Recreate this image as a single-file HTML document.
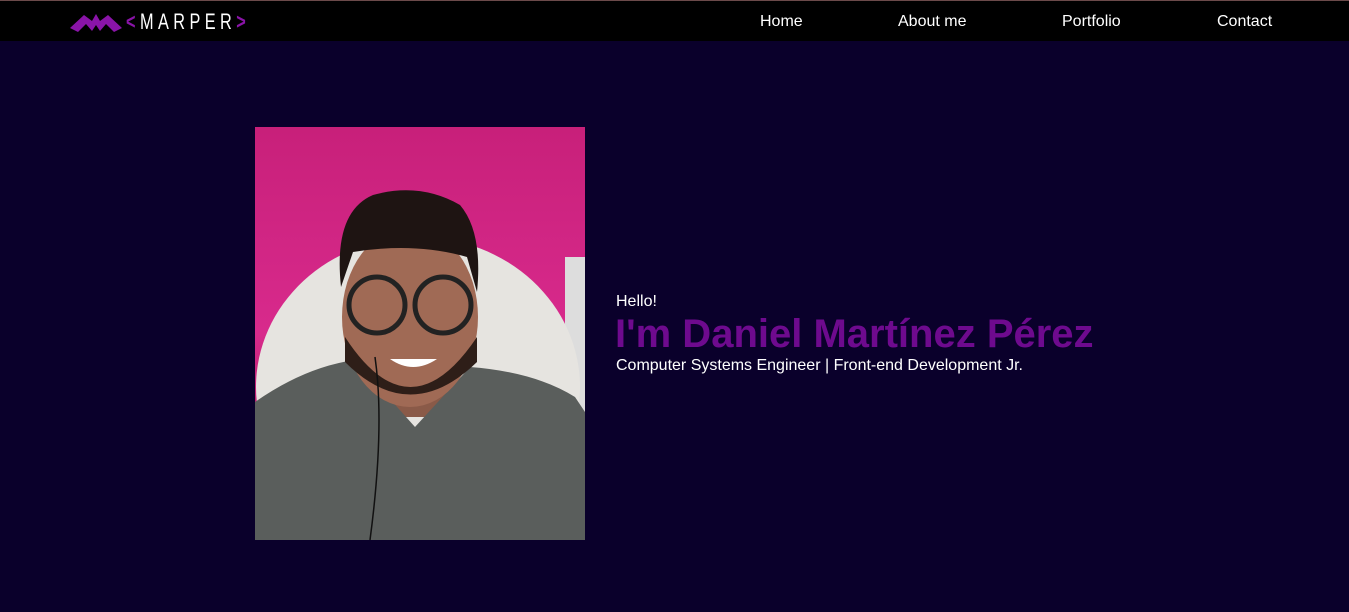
<!DOCTYPE html>
<html><head><meta charset="utf-8"><style>
*{margin:0;padding:0;box-sizing:border-box}
body{width:1349px;height:612px;background:#0a002b;font-family:"Liberation Sans",Arial,sans-serif;overflow:hidden;position:relative}
header{position:absolute;left:0;top:0;width:1349px;height:41px;background:#000;border-top:1px solid #6b4a4a}
.logo{position:absolute;left:70px;top:10px}
.brand{position:absolute;left:126px;top:8px;color:#fff;font-size:22px;letter-spacing:6px;font-family:"Liberation Sans Narrow","Liberation Sans",sans-serif;transform:scaleX(.74);transform-origin:left;white-space:nowrap}
.brand b{color:#8a14a8;font-weight:bold}
nav a{position:absolute;top:12px;color:#fff;font-size:16px;text-decoration:none}
.photo{position:absolute;left:255px;top:127px}
.t1{position:absolute;left:616px;top:293px;color:#fff;font-size:16px}
.t2{position:absolute;left:615px;top:312px;color:#6e0a8e;font-size:40px;font-weight:bold}
.t3{position:absolute;left:616px;top:357px;color:#fff;font-size:16px}
</style></head><body>
<header>
<svg class="logo" width="52" height="22" viewBox="0 0 52 22"><path d="M0 17 L14 4 L22 10 L26 3 L30 10 L38 4 L52 17 L44 21 L36 13 L30 20 L26 14 L22 20 L16 13 L8 21Z" fill="#8a14a8"/></svg>
<div class="brand"><b>&lt;</b>MARPER<b>&gt;</b></div>
<nav><a style="left:760px">Home</a><a style="left:898px">About me</a><a style="left:1062px">Portfolio</a><a style="left:1217px">Contact</a></nav>
</header>
<svg class="photo" width="330" height="413" viewBox="0 0 330 413">
<defs><linearGradient id="c" x1="0" y1="0" x2="0" y2="1"><stop offset="0" stop-color="#c8207a"/><stop offset=".5" stop-color="#d82a8c"/><stop offset="1" stop-color="#8a1040"/></linearGradient></defs>
<rect width="330" height="413" fill="url(#c)"/>
<rect x="310" y="130" width="20" height="200" fill="#ddd"/>
<ellipse cx="163" cy="260" rx="162" ry="150" fill="#e6e4e0"/>
<rect x="125" y="230" width="70" height="60" fill="#8a5a48"/>
<path d="M0 275 Q50 240 100 233 L160 300 L215 240 Q280 245 320 270 L330 285 L330 413 L0 413Z" fill="#5a5e5c"/>
<ellipse cx="155" cy="190" rx="68" ry="90" fill="#a06a55"/>
<path d="M90 210 Q155 310 222 210 L222 235 Q155 300 90 235Z" fill="#2e1e18"/>
<path d="M86 160 Q78 85 118 68 Q165 55 205 78 Q228 105 222 165 L212 130 Q160 115 98 125Z" fill="#1e1412"/>
<circle cx="122" cy="178" r="28" fill="none" stroke="#222" stroke-width="5"/>
<circle cx="188" cy="178" r="28" fill="none" stroke="#222" stroke-width="5"/>
<path d="M135 232 Q158 248 182 232 Z" fill="#fff"/>
<path d="M120 230 Q130 300 115 413" fill="none" stroke="#111" stroke-width="1.5"/>
</svg>
<div class="t1">Hello!</div>
<div class="t2">I'm Daniel Martínez Pérez</div>
<div class="t3">Computer Systems Engineer | Front-end Development Jr.</div>
</body></html>
